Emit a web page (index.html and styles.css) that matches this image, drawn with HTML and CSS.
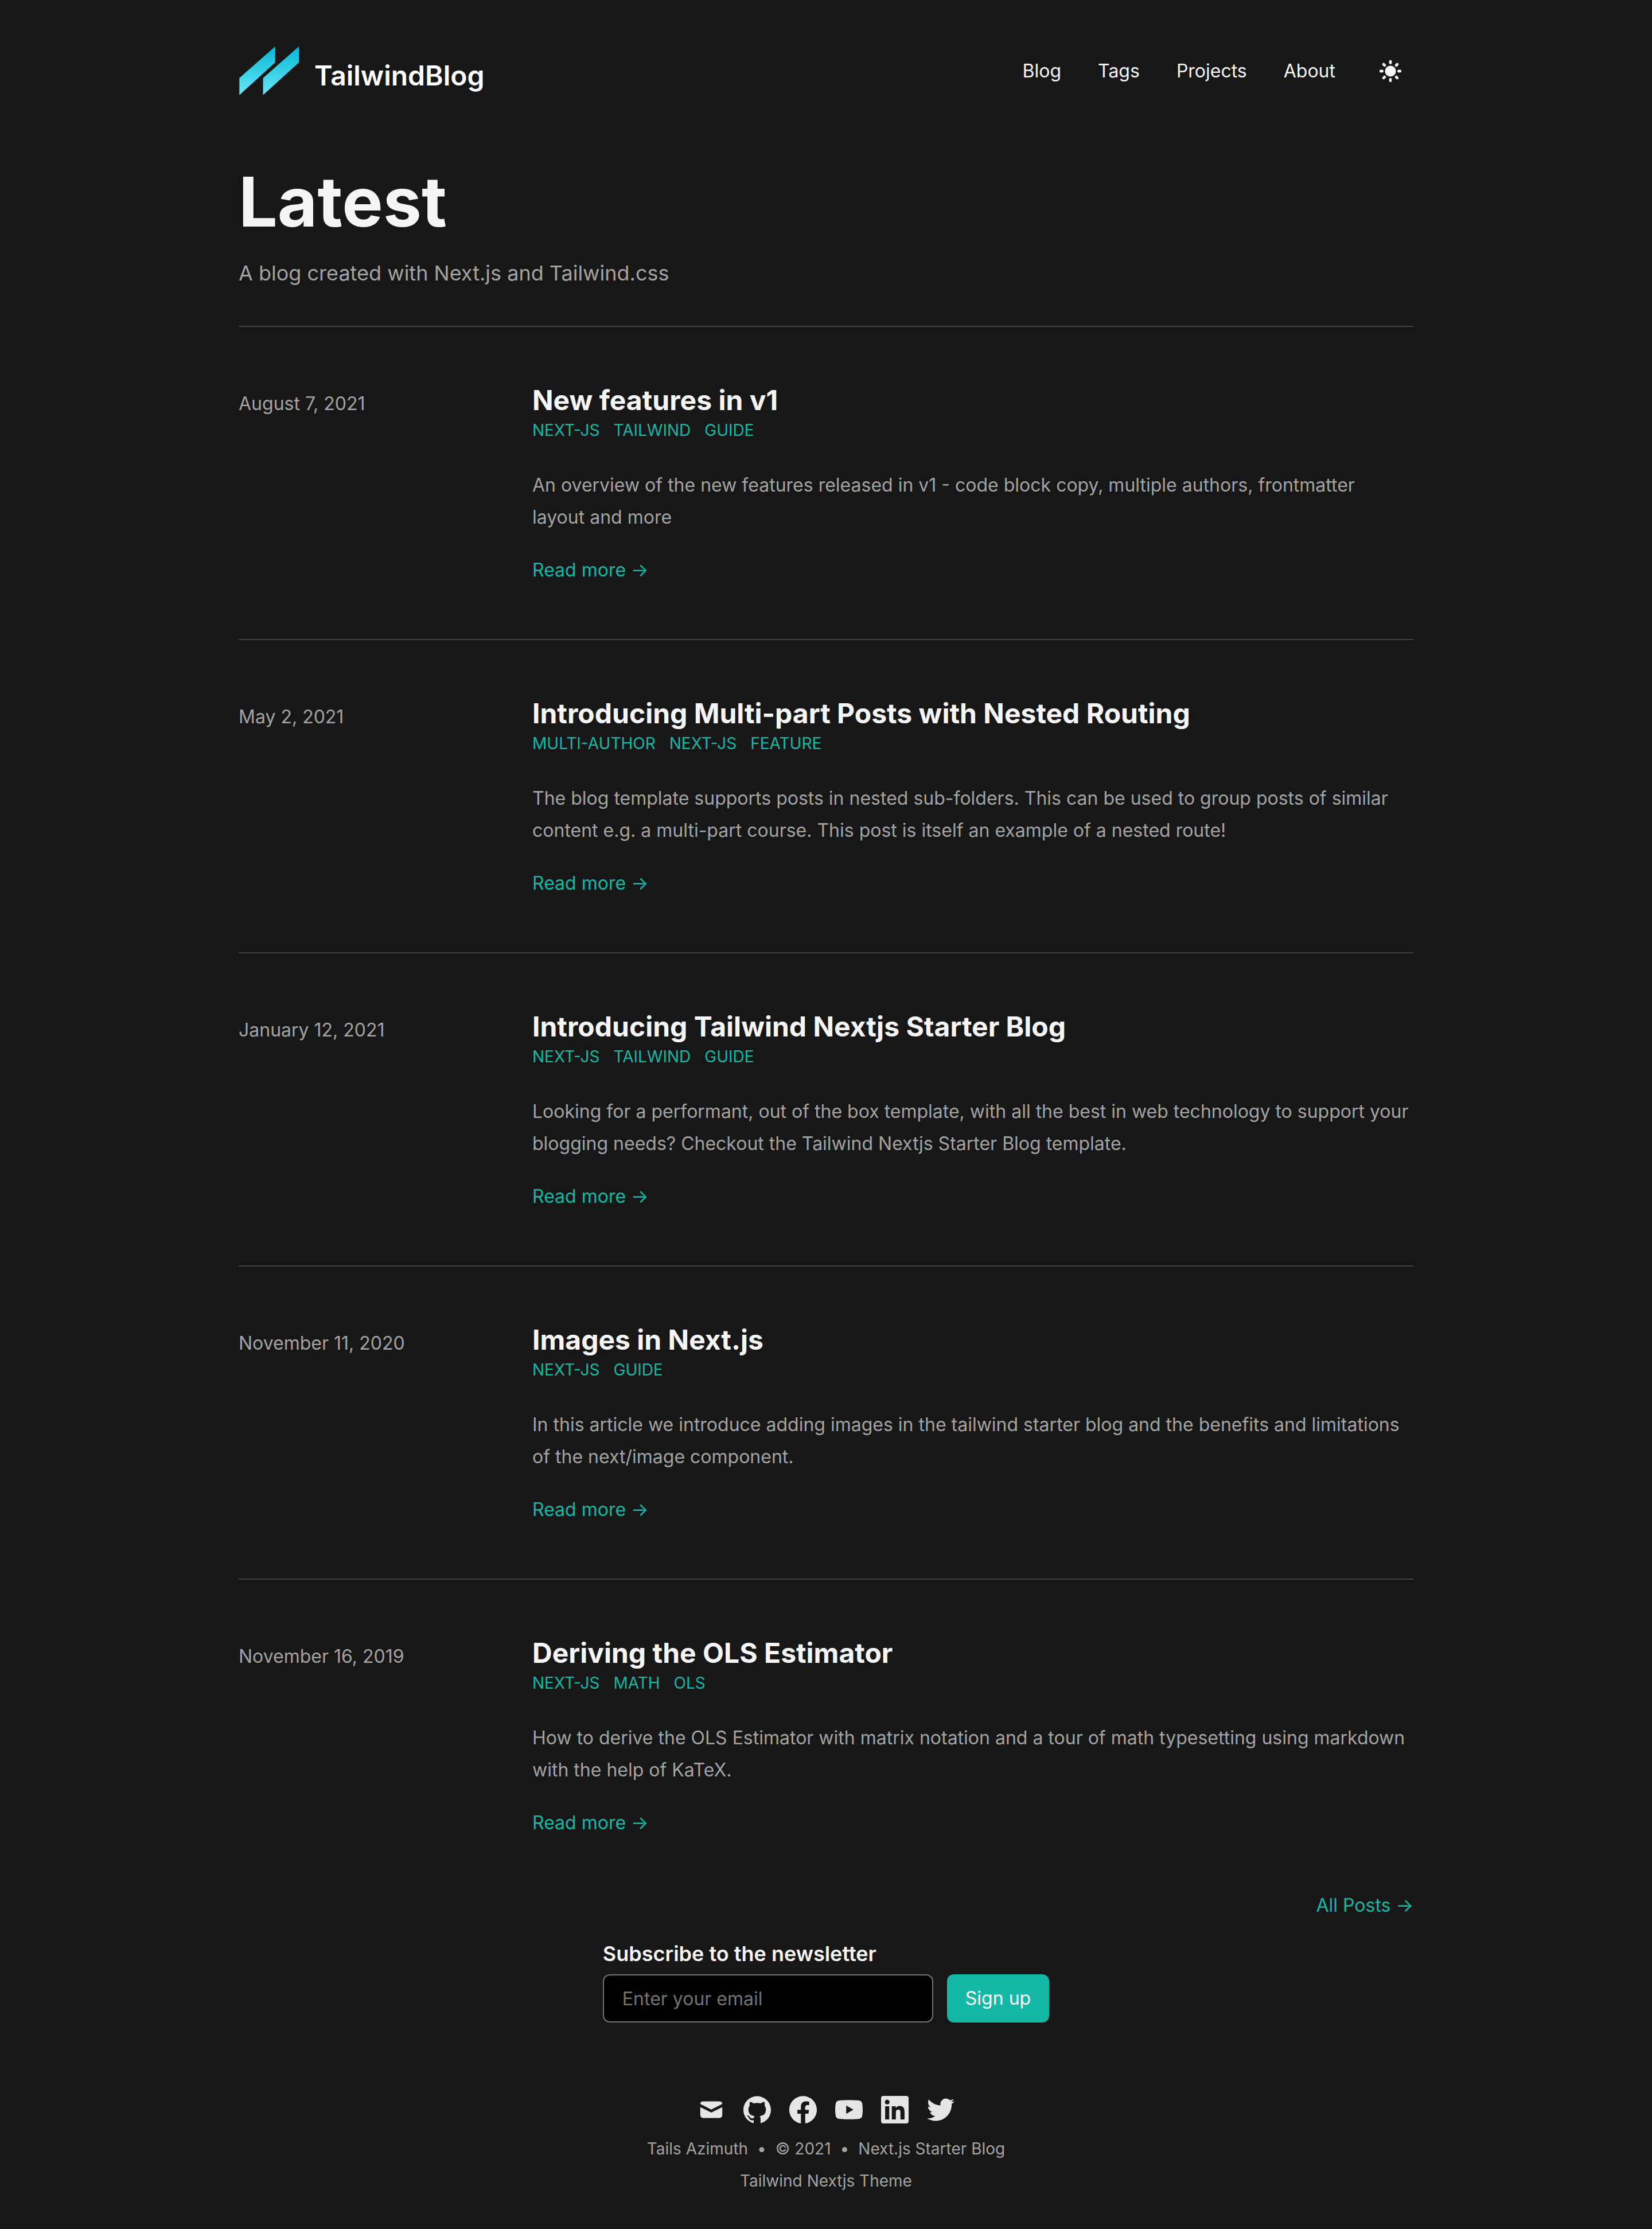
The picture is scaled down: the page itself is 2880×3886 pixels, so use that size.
FILE: index.html
```html
<!DOCTYPE html>
<html lang="en">
<head>
  <meta charset="utf-8">
  <meta name="viewport" content="width=device-width, initial-scale=1">
  <title>TailwindBlog</title>
  <link rel="stylesheet" href="styles.css">
</head>
<body>
  <div class="container">
    <header class="site-header">
      <a class="brand" href="#" aria-label="TailwindBlog">
        <svg class="brand-logo" viewBox="0 0 108 88" aria-hidden="true">
          <defs>
            <linearGradient id="logo-fill" gradientUnits="userSpaceOnUse" x1="0" y1="1" x2="0" y2="86">
              <stop offset="0" stop-color="#06b6d4"/>
              <stop offset="1" stop-color="#67e8f9"/>
            </linearGradient>
          </defs>
          <path fill="url(#logo-fill)" d="M1.3 56 63.7 1v28L1.3 85.700zM42.600 56 105 1v28L42.600 85.700z"/>
        </svg>
        <span class="brand-name">TailwindBlog</span>
      </a>
      <div class="header-right">
        <nav class="nav">
          <a href="#">Blog</a>
          <a href="#">Tags</a>
          <a href="#">Projects</a>
          <a href="#">About</a>
        </nav>
        <button class="theme-toggle" type="button" aria-label="Toggle dark mode">
          <svg viewBox="0 0 20 20" aria-hidden="true"><path fill-rule="evenodd" clip-rule="evenodd" d="M10 2a1 1 0 011 1v1a1 1 0 11-2 0V3a1 1 0 011-1zm4 8a4 4 0 11-8 0 4 4 0 018 0zm-.464 4.95l.707.707a1 1 0 001.414-1.414l-.707-.707a1 1 0 00-1.414 1.414zm2.12-10.607a1 1 0 010 1.414l-.706.707a1 1 0 11-1.414-1.414l.707-.707a1 1 0 011.414 0zM17 11a1 1 0 100-2h-1a1 1 0 100 2h1zm-7 4a1 1 0 011 1v1a1 1 0 11-2 0v-1a1 1 0 011-1zM5.050 6.464A1 1 0 106.465 5.050l-.708-.707a1 1 0 00-1.414 1.414l.707.707zm1.414 8.486l-.707.707a1 1 0 01-1.414-1.414l.707-.707a1 1 0 011.414 1.414zM4 11a1 1 0 100-2H3a1 1 0 000 2h1z"/></svg>
        </button>
      </div>
    </header>

    <main>
      <div class="intro">
        <h1>Latest</h1>
        <p>A blog created with Next.js and Tailwind.css</p>
      </div>

      <ul class="posts">
        <li>
          <article class="post">
            <time class="post-date" datetime="2021-08-07">August 7, 2021</time>
            <div class="post-body">
              <h2><a href="#">New features in v1</a></h2>
              <div class="tags"><a href="#">next-js</a><a href="#">tailwind</a><a href="#">guide</a></div>
              <p class="summary">An overview of the new features released in v1 - code block copy, multiple authors, frontmatter layout and more</p>
              <a class="more" href="#">Read more →</a>
            </div>
          </article>
        </li>
        <li>
          <article class="post">
            <time class="post-date" datetime="2021-05-02">May 2, 2021</time>
            <div class="post-body">
              <h2><a href="#">Introducing Multi-part Posts with Nested Routing</a></h2>
              <div class="tags"><a href="#">multi-author</a><a href="#">next-js</a><a href="#">feature</a></div>
              <p class="summary">The blog template supports posts in nested sub-folders. This can be used to group posts of similar content e.g. a multi-part course. This post is itself an example of a nested route!</p>
              <a class="more" href="#">Read more →</a>
            </div>
          </article>
        </li>
        <li>
          <article class="post">
            <time class="post-date" datetime="2021-01-12">January 12, 2021</time>
            <div class="post-body">
              <h2><a href="#">Introducing Tailwind Nextjs Starter Blog</a></h2>
              <div class="tags"><a href="#">next-js</a><a href="#">tailwind</a><a href="#">guide</a></div>
              <p class="summary">Looking for a performant, out of the box template, with all the best in web technology to support your blogging needs? Checkout the Tailwind Nextjs Starter Blog template.</p>
              <a class="more" href="#">Read more →</a>
            </div>
          </article>
        </li>
        <li>
          <article class="post">
            <time class="post-date" datetime="2020-11-11">November 11, 2020</time>
            <div class="post-body">
              <h2><a href="#">Images in Next.js</a></h2>
              <div class="tags"><a href="#">next-js</a><a href="#">guide</a></div>
              <p class="summary">In this article we introduce adding images in the tailwind starter blog and the benefits and limitations of the next/image component.</p>
              <a class="more" href="#">Read more →</a>
            </div>
          </article>
        </li>
        <li>
          <article class="post">
            <time class="post-date" datetime="2019-11-16">November 16, 2019</time>
            <div class="post-body">
              <h2><a href="#">Deriving the OLS Estimator</a></h2>
              <div class="tags"><a href="#">next-js</a><a href="#">math</a><a href="#">ols</a></div>
              <p class="summary">How to derive the OLS Estimator with matrix notation and a tour of math typesetting using markdown with the help of KaTeX.</p>
              <a class="more" href="#">Read more →</a>
            </div>
          </article>
        </li>
      </ul>

      <div class="all-posts"><a href="#">All Posts →</a></div>

      <section class="newsletter">
        <form>
          <label for="email">Subscribe to the newsletter</label>
          <div class="newsletter-row">
            <input id="email" type="email" name="email" placeholder="Enter your email">
            <button type="submit">Sign up</button>
          </div>
        </form>
      </section>
    </main>

    <footer class="site-footer">
      <div class="social">
        <a href="#" aria-label="Mail"><svg viewBox="0 0 20 20" aria-hidden="true"><path d="M2.003 5.884L10 9.882l7.997-3.998A2 2 0 0016 4H4a2 2 0 00-1.997 1.884z"/><path d="M18 8.118l-8 4-8-4V14a2 2 0 002 2h12a2 2 0 002-2V8.118z"/></svg></a>
        <a href="#" aria-label="GitHub"><svg viewBox="0 0 24 24" aria-hidden="true"><path d="M12 .297c-6.630 0-12 5.373-12 12 0 5.303 3.438 9.800 8.205 11.385.6.113.82-.258.82-.577 0-.285-.010-1.040-.015-2.040-3.338.724-4.042-1.610-4.042-1.610C4.422 18.070 3.633 17.700 3.633 17.700c-1.087-.744.084-.729.084-.729 1.205.084 1.838 1.236 1.838 1.236 1.070 1.835 2.809 1.305 3.495.998.108-.776.417-1.305.76-1.605-2.665-.3-5.466-1.332-5.466-5.930 0-1.310.465-2.380 1.235-3.220-.135-.303-.54-1.523.105-3.176 0 0 1.005-.322 3.300 1.230.96-.267 1.980-.399 3-.405 1.020.006 2.040.138 3 .405 2.280-1.552 3.285-1.230 3.285-1.230.645 1.653.24 2.873.12 3.176.765.84 1.230 1.910 1.230 3.220 0 4.610-2.805 5.625-5.475 5.920.42.36.81 1.096.81 2.220 0 1.606-.015 2.896-.015 3.286 0 .315.210.690.825.570C20.565 22.092 24 17.592 24 12.297c0-6.627-5.373-12-12-12"/></svg></a>
        <a href="#" aria-label="Facebook"><svg viewBox="0 0 24 24" aria-hidden="true"><path d="M24 12.073c0-6.627-5.373-12-12-12s-12 5.373-12 12c0 5.990 4.388 10.954 10.125 11.854v-8.385H7.078v-3.470h3.047V9.430c0-3.007 1.792-4.669 4.533-4.669 1.312 0 2.686.235 2.686.235v2.953H15.830c-1.491 0-1.956.925-1.956 1.874v2.250h3.328l-.532 3.470h-2.796v8.385C19.612 23.027 24 18.062 24 12.073z"/></svg></a>
        <a href="#" aria-label="YouTube"><svg viewBox="0 0 24 24" aria-hidden="true"><path d="M23.499 6.203a3.008 3.008 0 00-2.089-2.089c-1.870-.501-9.400-.501-9.400-.501s-7.509-.010-9.399.501a3.008 3.008 0 00-2.088 2.090A31.258 31.260 0 000 12.010a31.258 31.260 0 00.523 5.785 3.008 3.008 0 002.088 2.089c1.869.502 9.400.502 9.400.502s7.508 0 9.399-.502a3.008 3.008 0 002.089-2.090 31.258 31.260 0 00.5-5.784 31.258 31.260 0 00-.5-5.808zm-13.891 9.400V8.407l6.266 3.604z"/></svg></a>
        <a href="#" aria-label="LinkedIn"><svg viewBox="0 0 24 24" aria-hidden="true"><path d="M20.447 20.452h-3.554v-5.569c0-1.328-.027-3.037-1.852-3.037-1.853 0-2.136 1.445-2.136 2.939v5.667H9.351V9h3.414v1.561h.046c.477-.9 1.637-1.850 3.370-1.850 3.601 0 4.267 2.370 4.267 5.455v6.286zM5.337 7.433c-1.144 0-2.063-.926-2.063-2.065 0-1.138.92-2.063 2.063-2.063 1.140 0 2.064.925 2.064 2.063 0 1.139-.925 2.065-2.064 2.065zm1.782 13.019H3.555V9h3.564v11.452zM22.225 0H1.771C.792 0 0 .774 0 1.729v20.542C0 23.227.792 24 1.771 24h20.451C23.200 24 24 23.227 24 22.271V1.729C24 .774 23.200 0 22.222 0h.003z"/></svg></a>
        <a href="#" aria-label="Twitter"><svg viewBox="0 0 24 24" aria-hidden="true"><path d="M23.953 4.570a10 10 0 01-2.825.775 4.958 4.958 0 002.163-2.723c-.951.555-2.005.959-3.127 1.184a4.920 4.920 0 00-8.384 4.482C7.690 8.095 4.067 6.130 1.640 3.162a4.822 4.822 0 00-.666 2.475c0 1.710.87 3.213 2.188 4.096a4.904 4.904 0 01-2.228-.616v.060a4.923 4.923 0 003.946 4.827 4.996 4.996 0 01-2.212.085 4.936 4.936 0 004.604 3.417 9.867 9.867 0 01-6.102 2.105c-.39 0-.779-.023-1.170-.067a13.995 13.995 0 007.557 2.209c9.053 0 13.998-7.496 13.998-13.985 0-.21 0-.42-.015-.63A9.935 9.935 0 0024 4.590z"/></svg></a>
      </div>
      <div class="credits">
        <span>Tails Azimuth</span><span>•</span><span>© 2021</span><span>•</span><a href="#">Next.js Starter Blog</a>
      </div>
      <div class="theme-credit"><a href="#">Tailwind Nextjs Theme</a></div>
    </footer>
  </div>
</body>
</html>
```
FILE: styles.css
```css
*,
*::before,
*::after {
  box-sizing: border-box;
}

body {
  margin: 0;
  background: #171717;
  color: #a3a3a3;
  font-family: Inter, "Liberation Sans", sans-serif;
  font-size: 32px;
  line-height: 48px;
  -webkit-font-smoothing: antialiased;
}

h1,
h2,
p,
ul {
  margin: 0;
  padding: 0;
}

ul {
  list-style: none;
}

a {
  color: inherit;
  text-decoration: none;
}

svg {
  display: block;
  fill: currentColor;
}

button,
input {
  font: inherit;
}

.container {
  max-width: 2144px;
  margin: 0 auto;
  padding: 0 48px;
}

/* Header */
.site-header {
  display: flex;
  align-items: center;
  justify-content: space-between;
  padding: 80px 0;
}

.brand {
  display: flex;
  align-items: center;
  gap: 24px;
}

.brand-logo {
  width: 108px;
  height: 88px;
}

.brand-name {
  height: 48px;
  color: #fff;
  font-size: 48px;
  font-weight: 600;
  line-height: 64px;
}

.header-right {
  display: flex;
  align-items: center;
}

.nav {
  display: flex;
  color: #f5f5f5;
}

.nav a {
  padding: 0 32px;
}

.theme-toggle {
  width: 64px;
  height: 64px;
  margin: 0 8px 0 32px;
  padding: 8px;
  border: 0;
  background: none;
  color: #f5f5f5;
}

/* Page intro */
.intro {
  display: grid;
  gap: 40px;
  padding: 48px 0 64px;
}

.intro h1 {
  color: #f5f5f5;
  font-size: 120px;
  font-weight: 700;
  line-height: 112px;
}

.intro p {
  font-size: 36px;
  line-height: 56px;
}

/* Post list */
.posts li {
  padding: 96px 0;
  border-top: 2px solid #404040;
}

.post {
  display: grid;
  grid-template-columns: 1fr 3fr;
  align-items: baseline;
}

.post h2 {
  color: #f5f5f5;
  font-size: 48px;
  font-weight: 700;
  line-height: 64px;
}

.tags {
  display: flex;
  flex-wrap: wrap;
  gap: 0 24px;
  color: #14b8a6;
  font-size: 28px;
  line-height: 40px;
  text-transform: uppercase;
}

.summary {
  margin: 48px 0 40px;
  padding-right: 4px;
  line-height: 56px;
}

.more {
  display: block;
  color: #14b8a6;
}

.all-posts {
  color: #14b8a6;
  text-align: right;
}

/* Newsletter */
.newsletter {
  display: flex;
  justify-content: center;
  padding-top: 32px;
}

.newsletter label {
  display: block;
  padding-bottom: 8px;
  color: #f5f5f5;
  font-size: 36px;
  font-weight: 600;
  line-height: 56px;
}

.newsletter-row {
  display: flex;
  gap: 24px;
}

.newsletter input {
  width: 576px;
  height: 84px;
  padding: 0 32px;
  border: 2px solid #737373;
  border-radius: 12px;
  background: #000;
  color: #f5f5f5;
}

.newsletter input::placeholder {
  color: #737373;
  opacity: 1;
}

.newsletter button {
  height: 84px;
  padding: 0 32px;
  border: 0;
  border-radius: 12px;
  background: #14b8a6;
  color: #fff;
}

/* Footer */
.site-footer {
  display: flex;
  flex-direction: column;
  align-items: center;
  margin-top: 128px;
  padding-bottom: 64px;
  font-size: 28px;
  line-height: 40px;
}

.social {
  display: flex;
  gap: 32px;
  margin-bottom: 24px;
  color: #e5e5e5;
}

.social svg {
  width: 48px;
  height: 48px;
}

.credits {
  display: flex;
  gap: 16px;
  margin-bottom: 16px;
}
```
